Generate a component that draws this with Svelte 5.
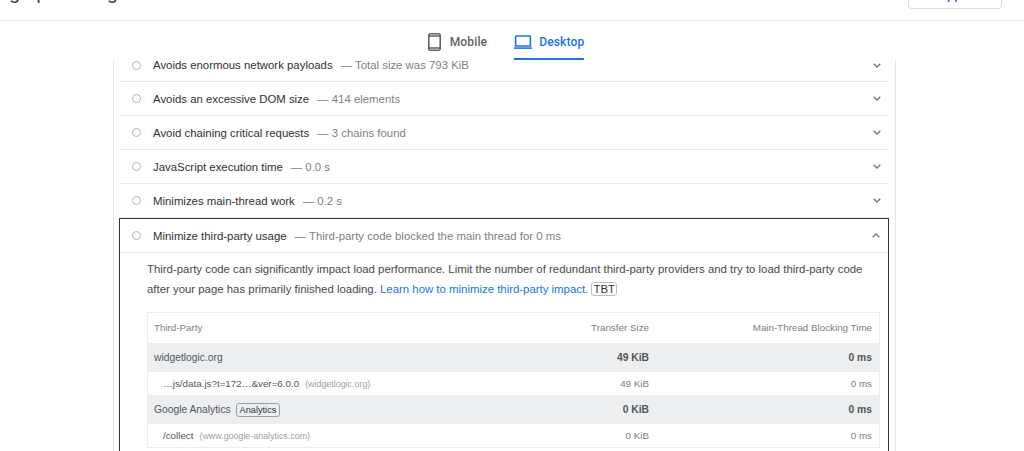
<script>
	const audits = [
		{ title: 'Avoids enormous network payloads', detail: 'Total size was 793 KiB' },
		{ title: 'Avoids an excessive DOM size', detail: '414 elements' },
		{ title: 'Avoid chaining critical requests', detail: '3 chains found' },
		{ title: 'JavaScript execution time', detail: '0.0 s' },
		{ title: 'Minimizes main-thread work', detail: '0.2 s' },
	]

	const rows = [
		{ group: true, name: 'widgetlogic.org', size: '49 KiB', time: '0 ms' },
		{ url: '…js/data.js?t=172…&ver=6.0.0', host: '(widgetlogic.org)', size: '49 KiB', time: '0 ms' },
		{ group: true, name: 'Google Analytics', tag: 'Analytics', size: '0 KiB', time: '0 ms' },
		{ url: '/collect', host: '(www.google-analytics.com)', size: '0 KiB', time: '0 ms' },
	]
</script>

<header class="topbar">
	<span class="page-title">g up loading</span>
	<span class="support">Support</span>
</header>

<nav class="tabs">
	<div class="tab">
		<svg width="13" height="18" viewBox="0 0 13 18" aria-hidden="true">
			<path d="M2.5 0.8h8a1.7 1.7 0 0 1 1.7 1.7v13a1.7 1.7 0 0 1-1.7 1.7h-8a1.7 1.7 0 0 1-1.7-1.7v-13a1.7 1.7 0 0 1 1.7-1.7z M0.8 3h11.4 M0.8 15h11.4" fill="none" stroke="#5f6368" stroke-width="1.6" />
		</svg>
		<span>Mobile</span>
	</div>
	<div class="tab active">
		<svg width="18" height="14" viewBox="0 0 18 14" aria-hidden="true">
			<path d="M2.6 1h12.8a1 1 0 0 1 1 1v9h-14.800v-9a1 1 0 0 1 1-1z" fill="none" stroke="#1a73e8" stroke-width="1.6" />
			<path d="M0 12.300h18v1.600h-18z" fill="#1a73e8" />
		</svg>
		<span>Desktop</span>
	</div>
</nav>

<main class="panel">
	{#each audits as audit}
		<div class="audit">
			<span class="dot"></span>
			<span class="title">{audit.title}</span>
			<span class="detail">— {audit.detail}</span>
			<svg class="chevron" width="8" height="5" viewBox="0 0 8 5" aria-hidden="true">
				<path d="M0.7 0.700l3.300 3.300 3.300-3.300" fill="none" stroke="#757575" stroke-width="1.3" />
			</svg>
		</div>
	{/each}

	<section class="open">
		<div class="audit head">
			<span class="dot"></span>
			<span class="title">Minimize third-party usage</span>
			<span class="detail">— Third-party code blocked the main thread for 0 ms</span>
			<svg class="chevron" width="8" height="5" viewBox="0 0 8 5" aria-hidden="true">
				<path d="M0.7 4.300l3.300-3.300 3.300 3.300" fill="none" stroke="#757575" stroke-width="1.3" />
			</svg>
		</div>
		<div class="body">
			<p>
				Third-party code can significantly impact load performance. Limit the number of redundant third-party providers and try to load third-party code after your page has primarily finished loading.
				<a href="#learn">Learn how to minimize third-party impact.</a>
				<span class="tbt">TBT</span>
			</p>
			<div class="table">
				<div class="tr th">
					<span>Third-Party</span>
					<span class="num">Transfer Size</span>
					<span class="num">Main-Thread Blocking Time</span>
				</div>
				{#each rows as row}
					{#if row.group}
						<div class="tr group">
							<span class="name">
								{row.name}
								{#if row.tag}<span class="tag">{row.tag}</span>{/if}
							</span>
							<span class="num">{row.size}</span>
							<span class="num">{row.time}</span>
						</div>
					{:else}
						<div class="tr sub">
							<span class="url">{row.url}<small>{row.host}</small></span>
							<span class="num">{row.size}</span>
							<span class="num">{row.time}</span>
						</div>
					{/if}
				{/each}
			</div>
		</div>
	</section>
</main>

<style>
	:global(body) {
		background: #fff;
		font-family: "Liberation Sans", Arial, sans-serif;
		overflow: hidden;
	}

	.topbar {
		height: 21px;
		box-sizing: border-box;
		border-bottom: 1px solid #e8e8e8;
		display: flex;
		justify-content: space-between;
		align-items: flex-start;
		padding: 0 22px 0 9px;
		overflow: hidden;
	}
	.page-title {
		margin-top: -21px;
		font-family: Roboto, sans-serif;
		font-size: 20px;
		line-height: 26px;
		color: #444;
	}
	.support {
		margin-top: -20px;
		width: 92px;
		height: 27px;
		border: 1px solid #dadce0;
		border-radius: 4px;
		color: #1a73e8;
		font-family: Roboto, sans-serif;
		font-size: 13px;
		font-weight: 500;
		text-align: center;
		line-height: 27px;
	}

	.tabs {
		height: 39px;
		display: flex;
		justify-content: center;
		gap: 27px;
		padding-right: 12px;
		font-family: Roboto, sans-serif;
	}
	.tab {
		display: flex;
		align-items: center;
		gap: 9px;
		height: 39px;
		font-size: 12px;
		font-weight: 500;
		letter-spacing: 0.15px;
		color: #5f6368;
		box-sizing: border-box;
		padding-top: 2px;
	}
	.tab.active {
		color: #1a73e8;
		border-bottom: 2px solid #1a73e8;
		gap: 7px;
		padding-top: 4px;
	}

	.panel {
		width: 783px;
		height: 391px;
		margin-left: 113px;
		box-sizing: border-box;
		border-left: 1px solid #e6e6e6;
		border-right: 1px solid #e6e6e6;
		padding: 0 6px;
		overflow: hidden;
	}

	.audit {
		display: flex;
		align-items: center;
		height: 34px;
		box-sizing: border-box;
		border-bottom: 1px solid #ebebeb;
		padding: 0 8px 0 12px;
		font-size: 11.4px;
		color: #303030;
	}
	.audit:first-child {
		height: 22px;
		padding-bottom: 11px;
	}
	.dot {
		width: 7px;
		height: 7px;
		border: 1.5px solid #b5b5b5;
		border-radius: 50%;
		margin-right: 12px;
		flex: none;
	}
	.title {
		margin-right: 8px;
	}
	.detail {
		color: #808080;
	}
	.chevron {
		margin-left: auto;
	}

	.open {
		height: 240px;
		margin-left: -1px;
		border: 1px solid #333;
		border-bottom: none;
		box-sizing: border-box;
	}
	.open .head {
		height: 34px;
		padding: 0 8px 0 12px;
	}
	.body {
		padding: 6px 8px 0 27px;
		font-size: 11.4px;
		color: #484848;
	}
	p {
		margin: 0;
		line-height: 20px;
	}
	a {
		color: #1a73e8;
		text-decoration: none;
	}
	.tbt {
		border: 1px solid #bdbdbd;
		border-radius: 3px;
		padding: 0 1px;
		color: #303030;
	}

	.table {
		margin-top: 13px;
		height: 136px;
		box-sizing: border-box;
		border: 1px solid #ececec;
	}
	.tr {
		display: grid;
		grid-template-columns: 1fr 172px 223px;
		align-items: center;
		padding: 0 7px 0 6px;
		font-size: 10.3px;
	}
	.th {
		height: 30px;
		padding-bottom: 2px;
		box-sizing: border-box;
		color: #808080;
		font-size: 9.8px;
	}
	.group {
		height: 29px;
		background: #eceff1;
		color: #555;
	}
	.group .num {
		font-weight: 700;
	}
	.sub {
		height: 23px;
		color: #808080;
		font-size: 9.8px;
	}
	.num {
		text-align: right;
	}
	.url {
		padding-left: 9px;
		color: #555;
	}
	small {
		color: #a0a0a0;
		font-size: 8.9px;
		margin-left: 6px;
	}
	.tag {
		border: 1px solid #9e9e9e;
		border-radius: 3px;
		padding: 1px 3px;
		font-size: 9.2px;
		margin-left: 2px;
		color: #333;
	}
</style>
